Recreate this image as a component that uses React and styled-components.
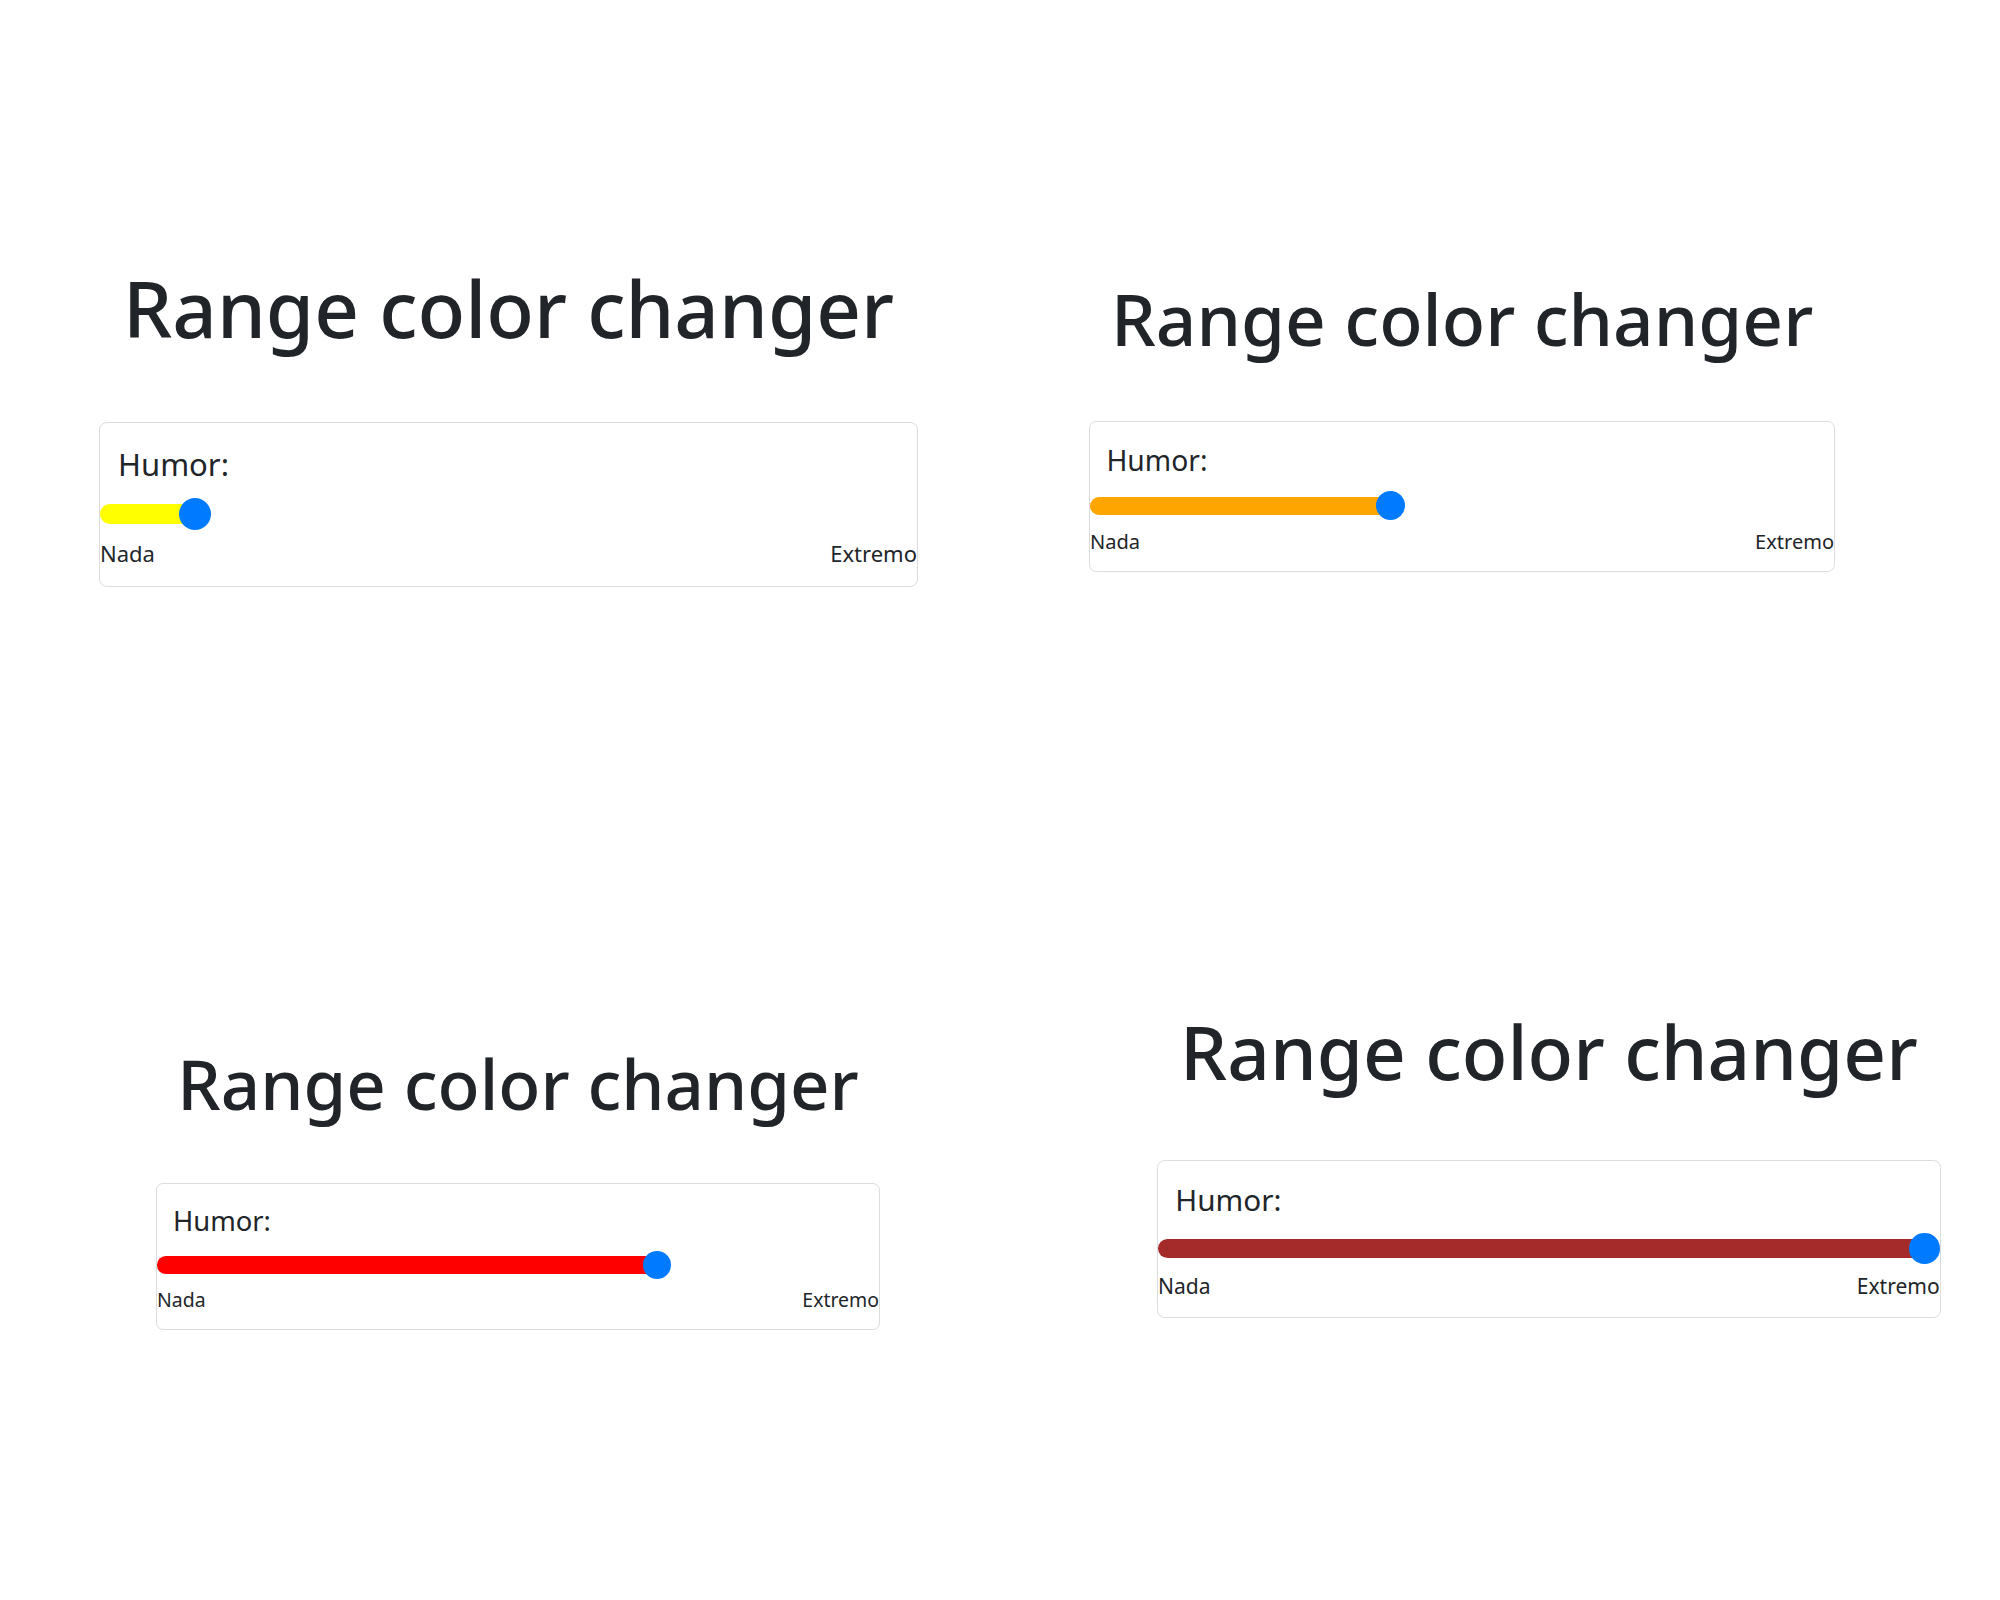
import { useState } from "react";
import styled, { createGlobalStyle } from "styled-components";

const GlobalStyle = createGlobalStyle`
  html, body {
    margin: 0;
    padding: 0;
    background: #fff;
  }
  body {
    font-family: "Noto Sans", Lato, sans-serif;
    color: #212529;
  }
`;

// every size is given for the largest panel and scaled by $s
const px = n => p => `${n * p.$s}px`;

const Page = styled.main`
  display: grid;
  grid-template-columns: 1000px 1000px;
  align-items: start;
  align-content: start;
  width: 2000px;
  min-height: 1600px;
`;

const Panel = styled.section`
  display: flex;
  flex-direction: column;
  align-items: center;
  width: ${px(819)};
  margin: ${p => p.$top}px 0 0 ${p => p.$left}px;
`;

const Title = styled.h1`
  margin: 0 0 ${px(66)};
  font-size: ${px(78)};
  font-weight: 500;
  line-height: 1.2;
  white-space: nowrap;
`;

const Card = styled.div`
  align-self: stretch;
  display: flex;
  flex-direction: column;
  border: 1px solid #dcdcdc;
  border-radius: ${px(8)};
  background: #fff;
`;

const Label = styled.label`
  padding: ${px(18)} ${px(18)} 0;
  font-size: ${px(31)};
  line-height: 1.5;
`;

const Range = styled.input`
  -webkit-appearance: none;
  appearance: none;
  display: block;
  width: 100%;
  height: ${px(32)};
  margin: ${px(11)} 0 0;
  padding: 0;
  background: transparent;
  outline: none;

  &::-webkit-slider-runnable-track {
    height: ${px(20)};
    border-radius: ${px(10)};
    background: linear-gradient(to right, ${p => p.$color} 0 var(--fill), transparent var(--fill));
  }
  &::-webkit-slider-thumb {
    -webkit-appearance: none;
    width: ${px(32)};
    height: ${px(32)};
    margin-top: ${px(-6)};
    border: none;
    border-radius: 50%;
    background: #007bff;
    cursor: pointer;
  }
`;

const Scale = styled.div`
  display: flex;
  justify-content: space-between;
  margin-top: ${px(7)};
  padding-bottom: ${px(16)};
  font-size: ${px(22)};
  line-height: 1.5;
`;

const colorFor = v => {
  if (v <= 25) return "#ffff00";
  if (v <= 50) return "#ffa500";
  if (v <= 75) return "#ff0000";
  return "#a52a2a";
};

const RangeColorChanger = ({ s, left, top, start }) => {
  const [value, setValue] = useState(start);
  const r = 16 * s;
  return (
    <Panel $s={s} $left={left} $top={top}>
      <Title $s={s}>Range color changer</Title>
      <Card $s={s}>
        <Label $s={s}>Humor:</Label>
        <Range
          $s={s}
          $color={colorFor(value)}
          type="range"
          min="0"
          max="100"
          value={value}
          onChange={e => setValue(Number(e.target.value))}
          style={{ "--fill": `calc(${r}px + (100% - ${2 * r}px) * ${value / 100})` }}
        />
        <Scale $s={s}>
          <span>Nada</span>
          <span>Extremo</span>
        </Scale>
      </Card>
    </Panel>
  );
};

const panels = [
  { s: 1, left: 99, top: 262, start: 10 },
  { s: 0.911, left: 89, top: 276, start: 40 },
  { s: 0.884, left: 156, top: 455, start: 70 },
  { s: 0.957, left: 157, top: 420, start: 100 },
];

export default function App() {
  return (
    <>
      <GlobalStyle />
      <Page>
        {panels.map((p, i) => <RangeColorChanger key={i} {...p} />)}
      </Page>
    </>
  );
}
